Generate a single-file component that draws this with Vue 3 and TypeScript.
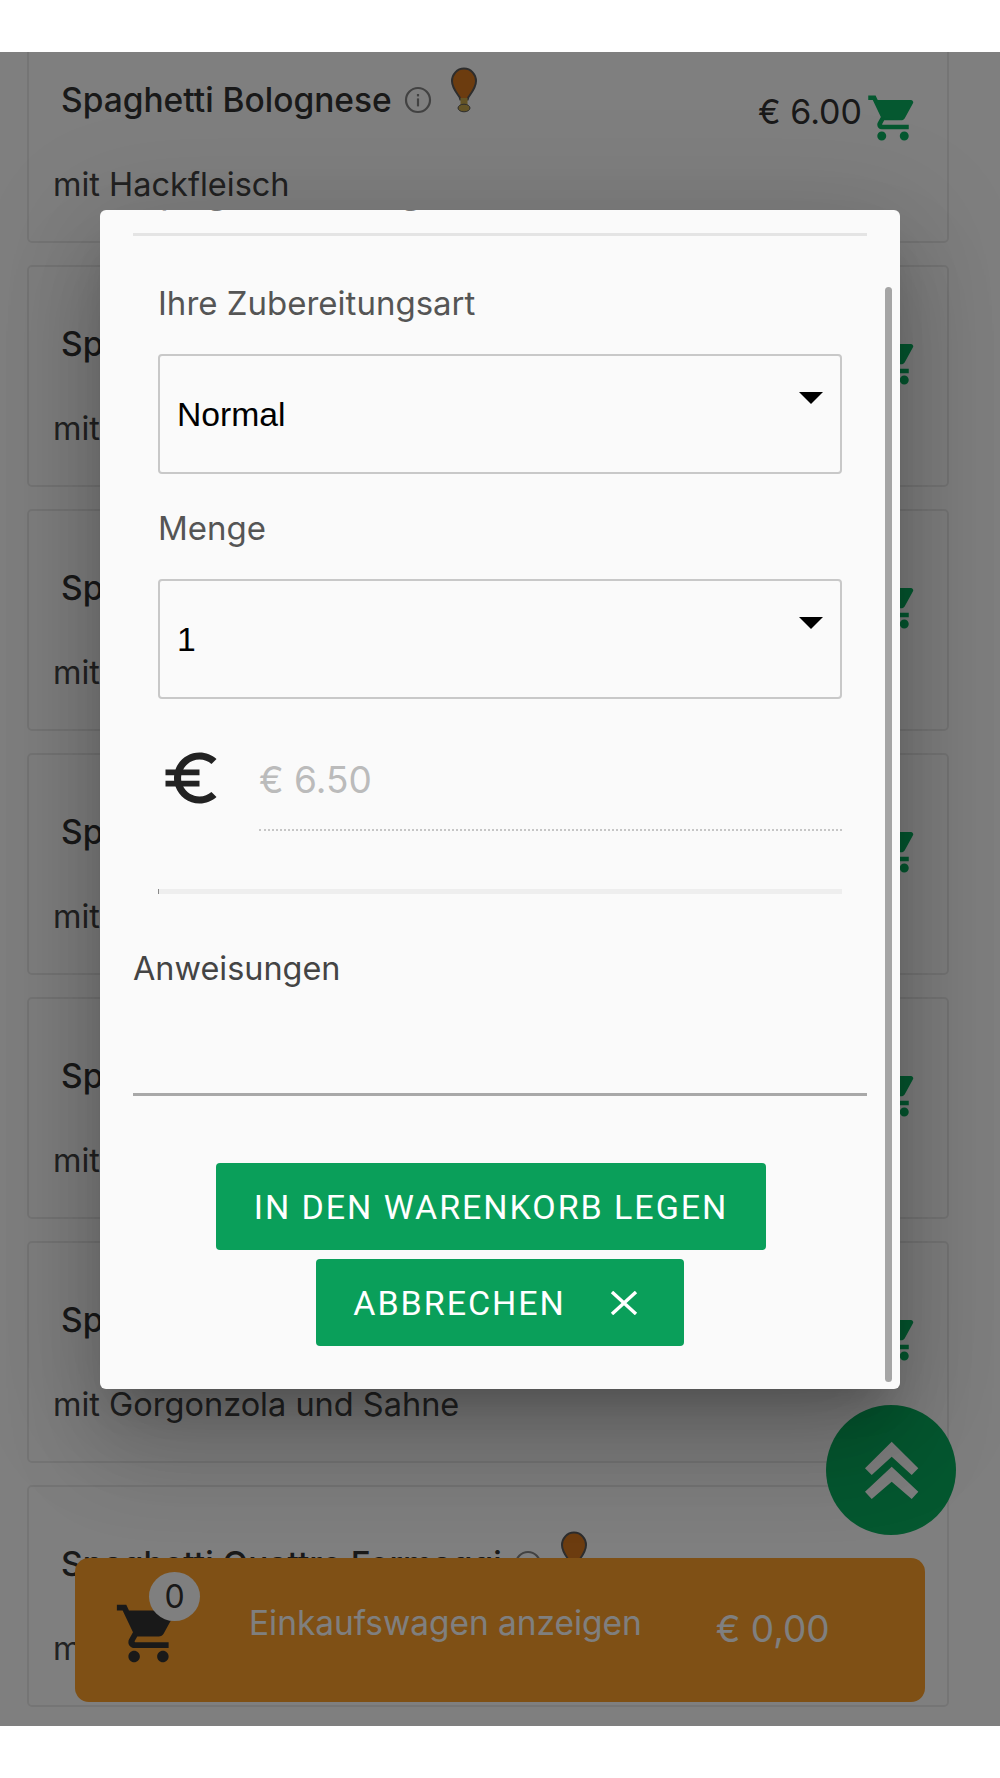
<template>
  <div class="screen">
    <div class="page">
      <div class="list">
        <div v-for="dish in dishes" :key="dish.title" class="card">
          <div class="card-head">
            <div class="card-title">
              <span class="title-text">{{ dish.title }}</span>
              <svg class="info" viewBox="0 0 28 28">
                <circle cx="14" cy="14" r="12" fill="none" stroke="#858585" stroke-width="2.2" />
                <rect x="12.9" y="12.4" width="2.2" height="8" fill="#858585" />
                <rect x="12.9" y="8" width="2.2" height="2.4" fill="#858585" />
              </svg>
              <svg class="drumstick" viewBox="0 0 28 46">
                <path d="M14 1.5C7 1.5 2 7.5 2 14c0 6.5 4 11 7.5 16l.8 2.5h7.4l.8-2.500C22 25 26 20.500 26 14 26 7.500 21 1.500 14 1.500z" fill="#d9781f" stroke="#5a5a5a" stroke-width="2" />
                <rect x="10.500" y="31" width="7" height="8" fill="#c9a94a" />
                <ellipse cx="14" cy="41" rx="6" ry="3.800" fill="#c9a94a" stroke="#5a5a5a" stroke-width="1" />
              </svg>
            </div>
            <div class="card-price">
              <span>€ 6.00</span>
              <svg class="cart-green" viewBox="0 0 24 24"><path :d="cartPath" /></svg>
            </div>
          </div>
          <div class="card-desc">{{ dish.desc }}</div>
        </div>
      </div>

      <button class="fab">
        <svg viewBox="0 0 130 130" width="130" height="130">
          <polygon points="65.700,36.700 92.300,63.300 85.700,70 65.700,51.700 45.700,70 39,63.300" fill="#fff" />
          <polygon points="65.700,61.700 92.300,86.700 85.700,94 65.700,76.700 45.700,94 39,86.700" fill="#fff" />
        </svg>
      </button>

      <div class="cart-bar">
        <div class="cart-icon">
          <svg viewBox="0 0 24 24" width="69" height="69"><path :d="cartPath" /></svg>
          <span class="badge">0</span>
        </div>
        <span class="cart-label">Einkaufswagen anzeigen</span>
        <span class="cart-total">€ 0,00</span>
      </div>

      <div class="overlay"></div>

      <div class="modal">
        <div class="peek">Spaghetti Bolognese</div>
        <div class="rule"></div>
        <div class="fields">
          <label class="field-label first">Ihre Zubereitungsart</label>
          <div class="select"><span>Normal</span><i class="caret"></i></div>
          <label class="field-label">Menge</label>
          <div class="select"><span>1</span><i class="caret"></i></div>
          <div class="price-row">
            <svg class="euro" viewBox="0 0 24 24">
              <path d="M15 18.500c-2.510 0-4.680-1.420-5.760-3.500H15v-2H8.580c-.05-.33-.08-.66-.08-1s.03-.67.08-1H15V9H9.240C10.320 6.920 12.500 5.500 15 5.500c1.610 0 3.090.59 4.230 1.570L21 5.300C19.410 3.870 17.300 3 15 3c-3.920 0-7.240 2.510-8.480 6H3v2h3.060c-.04.33-.06.66-.06 1s.02.67.06 1H3v2h3.520c1.240 3.490 4.560 6 8.480 6 2.310 0 4.410-.87 6-2.300l-1.780-1.770c-1.130.98-2.600 1.570-4.220 1.570z" />
            </svg>
            <div class="price-input">€ 6.50</div>
          </div>
          <div class="progress"></div>
        </div>
        <label class="notes-label">Anweisungen</label>
        <div class="notes"></div>
        <button class="btn btn-add">IN DEN WARENKORB LEGEN</button>
        <button class="btn btn-cancel">
          <span>ABBRECHEN</span>
          <svg viewBox="0 0 28 24" width="28" height="24">
            <path d="M2 1 26 23M26 1 2 23" stroke="#fff" stroke-width="3.400" fill="none" />
          </svg>
        </button>
        <div class="scrollbar"></div>
      </div>
    </div>
  </div>
</template>

<script setup lang="ts">
interface Dish {
  title: string;
  desc: string;
}

const dishes: Dish[] = [
  { title: 'Spaghetti Bolognese', desc: 'mit Hackfleisch' },
  { title: 'Spaghetti Carbonara', desc: 'mit Speck und Ei' },
  { title: 'Spaghetti Napoli', desc: 'mit Tomatensauce' },
  { title: 'Spaghetti Aglio e Olio', desc: 'mit Knoblauch' },
  { title: 'Spaghetti Funghi', desc: 'mit Champignons' },
  { title: 'Spaghetti Gorgonzola', desc: 'mit Gorgonzola und Sahne' },
  { title: 'Spaghetti Quattro Formaggi', desc: 'mit vier Käsesorten' },
];

const cartPath =
  'M7 18c-1.100 0-1.990.9-1.990 2S5.900 22 7 22s2-.9 2-2-.9-2-2-2zM1 2v2h2l3.600 7.590-1.350 2.450c-.16.28-.25.61-.25.96 0 1.100.9 2 2 2h12v-2H7.420c-.14 0-.25-.11-.25-.25l.03-.12.9-1.630h7.450c.75 0 1.410-.41 1.750-1.030l3.580-6.490c.08-.14.12-.31.12-.48 0-.55-.45-1-1-1H5.210l-.94-2H1zm16 16c-1.100 0-1.990.9-1.990 2s.89 2 1.990 2 2-.9 2-2-.9-2-2-2z';
</script>

<style scoped>
.screen {
  width: 1000px;
  height: 1778px;
  padding-top: 52px;
  box-sizing: border-box;
  background: #fff;
  font-family: Inter, "Noto Sans", sans-serif;
}
.page {
  position: relative;
  height: 1674px;
  overflow: hidden;
  background: #fff;
}
.list {
  display: flex;
  flex-direction: column;
  gap: 22px;
  margin-top: -31px;
  padding: 0 51px 0 27px;
}
.card {
  height: 222px;
  box-sizing: border-box;
  border: 2px solid #ebebeb;
  border-radius: 5px;
  padding: 0 27px 0 25px;
}
.card-head {
  display: flex;
  justify-content: space-between;
  height: 138px;
}
.card-title {
  display: flex;
  align-items: flex-start;
  padding: 57px 0 0 7px;
}
.title-text {
  font-size: 33.500px;
  line-height: 40px;
  font-weight: 500;
  color: #333;
  white-space: nowrap;
}
.info {
  width: 28px;
  height: 28px;
  margin: 6px 0 0 12px;
}
.drumstick {
  width: 28px;
  height: 46px;
  margin: -13px 0 0 18px;
}
.card-price {
  display: flex;
  align-items: flex-start;
  gap: 4px;
  padding-top: 51px;
  margin-top: 18px;
  font-size: 34px;
  line-height: 40px;
  color: #333;
}
.cart-green {
  width: 54px;
  height: 54px;
  margin-top: -1px;
  fill: #0ab060;
}
.card-desc {
  margin-left: -1px;
  font-size: 32.500px;
  line-height: 48px;
  color: #444;
  white-space: nowrap;
}
.fab {
  position: absolute;
  left: 826px;
  top: 1353px;
  width: 130px;
  height: 130px;
  border: none;
  border-radius: 50%;
  padding: 0;
  background: #0ab060;
}
.cart-bar {
  position: absolute;
  left: 75px;
  top: 1506px;
  width: 850px;
  height: 144px;
  border-radius: 14px;
  background: #fea02a;
  display: flex;
  align-items: flex-start;
}
.cart-icon {
  position: relative;
  width: 69px;
  height: 69px;
  margin: 41px 0 0 39px;
  flex: none;
}
.cart-icon svg {
  fill: #333;
  display: block;
}
.badge {
  position: absolute;
  left: 35px;
  top: -27px;
  width: 51px;
  height: 49px;
  border-radius: 50%;
  background: #fff;
  color: #333;
  font-size: 32px;
  line-height: 49px;
  text-align: center;
}
.cart-label {
  margin: 44px 0 0 66px;
  font-size: 33.400px;
  line-height: 42px;
  color: #fff;
  white-space: nowrap;
}
.cart-total {
  margin: 48px 0 0 74px;
  font-size: 37px;
  line-height: 46px;
  color: #fff;
  white-space: nowrap;
}
.overlay {
  position: absolute;
  inset: 0;
  background: rgba(0, 0, 0, 0.5);
}
.modal {
  position: absolute;
  left: 100px;
  top: 158px;
  width: 800px;
  height: 1179px;
  box-sizing: border-box;
  padding: 0 33px;
  overflow: hidden;
  border-radius: 6px;
  background: #fafafa;
  display: flex;
  flex-direction: column;
  align-items: stretch;
  box-shadow: 0 28px 38px -18px rgba(0, 0, 0, 0.2), 0 60px 95px 8px rgba(0, 0, 0, 0.14), 0 22px 115px 20px rgba(0, 0, 0, 0.12);
}
.peek {
  height: 30px;
  margin-top: -34px;
  padding-left: 2px;
  font-size: 38.500px;
  line-height: 26px;
  color: #777;
  white-space: nowrap;
  flex: none;
}
.rule {
  height: 2.500px;
  margin-top: 27px;
  background: #e4e4e4;
  flex: none;
}
.fields {
  padding: 0 25px;
  display: flex;
  flex-direction: column;
}
.field-label {
  display: block;
  margin-top: 34px;
  margin-bottom: 31px;
  font-size: 33px;
  line-height: 40px;
  color: #555;
}
.field-label.first {
  margin-top: 47.500px;
}
.select {
  position: relative;
  height: 120px;
  box-sizing: border-box;
  border: 2.500px solid #c8c8c8;
  border-radius: 4px;
  padding-left: 17px;
  display: flex;
  align-items: center;
  font-family: "Liberation Sans", Arial, sans-serif;
  font-size: 33.700px;
  color: #000;
}
.caret {
  position: absolute;
  right: 17px;
  top: 36px;
  width: 0;
  height: 0;
  border-left: 12px solid transparent;
  border-right: 12px solid transparent;
  border-top: 12px solid #000;
}
.price-row {
  display: flex;
  align-items: flex-start;
  margin-top: 45px;
}
.euro {
  width: 68px;
  height: 68px;
  margin-left: -1px;
  fill: #222;
  flex: none;
}
.price-input {
  flex: 1;
  margin-left: 34px;
  height: 87px;
  box-sizing: border-box;
  border-bottom: 2.500px dotted #c6c6c6;
  font-size: 37px;
  line-height: 72px;
  color: #bbb;
}
.progress {
  height: 5px;
  margin-top: 58px;
  background: #eee;
  border-left: 1px solid #888;
}
.notes-label {
  display: block;
  margin-top: 55px;
  font-size: 32.400px;
  line-height: 40px;
  color: #444;
}
.notes {
  height: 104px;
  border-bottom: 3px solid #a8a8a8;
  flex: none;
}
.btn {
  height: 87px;
  flex: none;
  border: none;
  border-radius: 4px;
  background: #0a9f5a;
  color: #fff;
  font-family: Roboto, "Noto Sans", sans-serif;
  font-size: 34px;
  letter-spacing: 1.950px;
  white-space: nowrap;
}
.btn-add {
  align-self: flex-start;
  width: 550px;
  margin: 67px 0 0 83px;
  padding: 0;
}
.btn-cancel {
  align-self: center;
  width: 368px;
  margin-top: 9px;
  padding: 0 9px 0 0;
  display: flex;
  align-items: center;
  justify-content: center;
  gap: 44px;
}
.scrollbar {
  position: absolute;
  left: 785px;
  top: 77px;
  width: 7px;
  height: 1095px;
  border-radius: 4px;
  background: #a5a5a5;
}
</style>
